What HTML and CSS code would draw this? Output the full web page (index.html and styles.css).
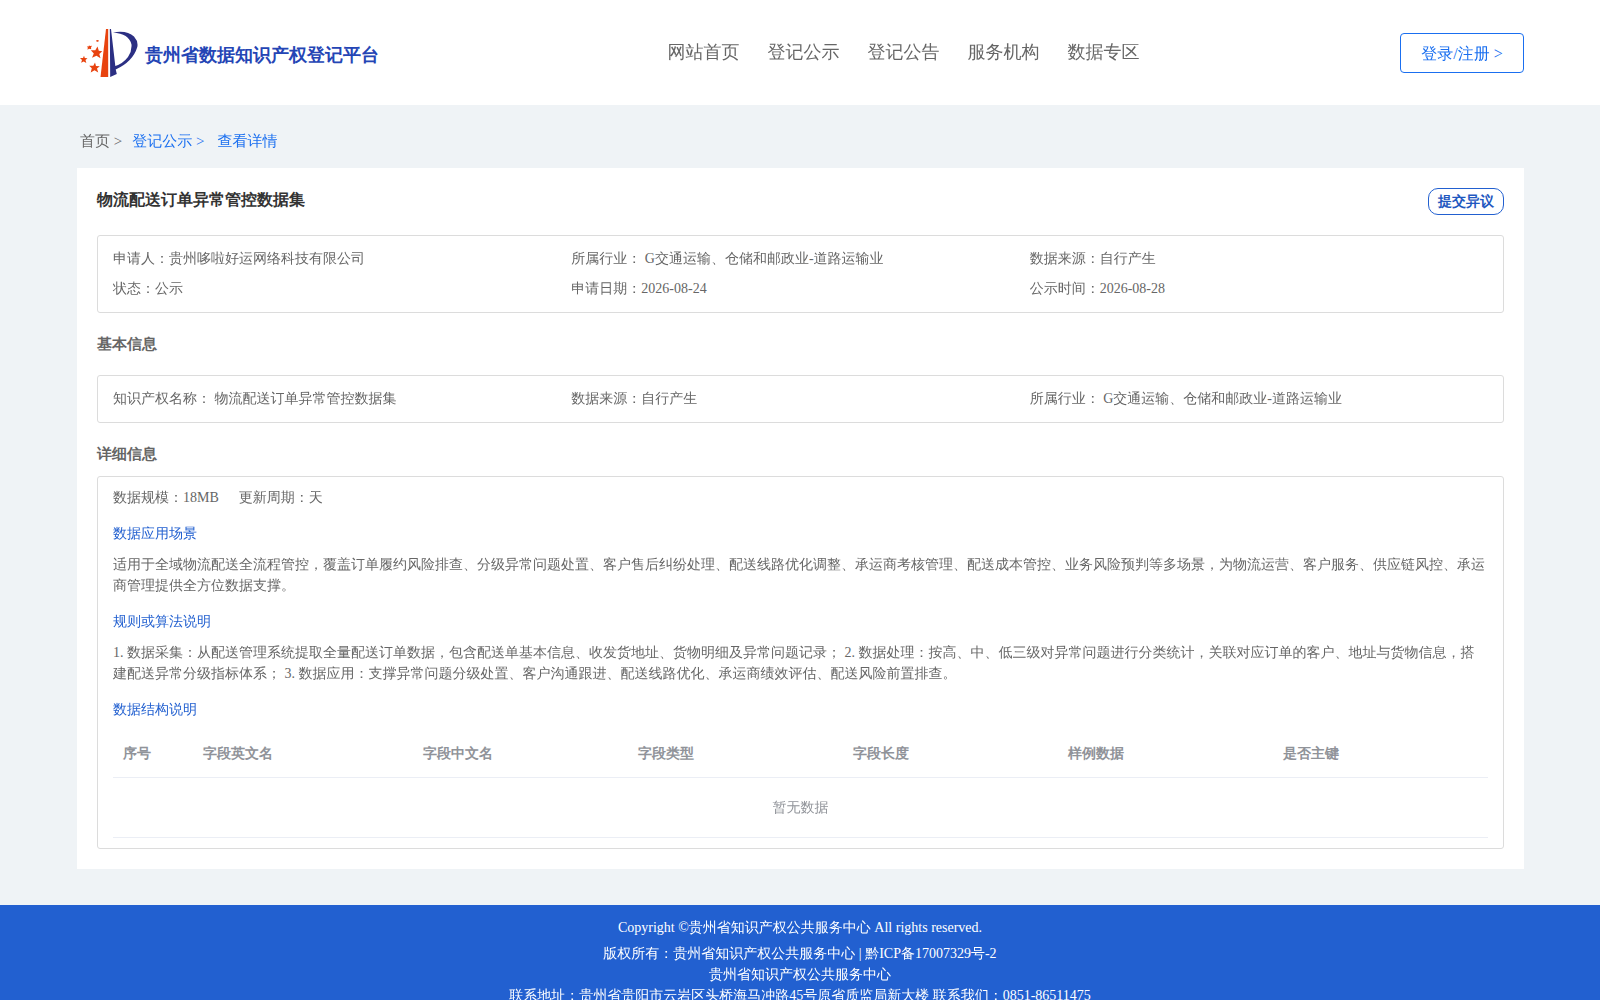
FILE: index.html
```html
<!DOCTYPE html>
<html lang="zh">
<head>
    <meta charset="UTF-8">
    <meta name="viewport" content="width=device-width, initial-scale=1.0">
    <title>贵州省数据知识产权登记平台</title>
    <link rel="stylesheet" href="styles.css">
</head>
<body>

    <!-- Header -->
    <header class="header">
        <a class="logo" href="#">
            <svg class="logo-icon" viewBox="0 0 58 50" aria-hidden="true">
                <path fill="#e8430f" d="M26 1H28.200V49H20.500Z"/>
                <path fill="#2b2f83" d="M29.800 1H31L35.300 38Q43 35.500 48 29Q52 23 51.500 16.500Q49 5.500 33 4.500Q47 2 54 8.500Q58.500 13.500 57.300 19Q53 33.500 35.700 41.500L36.800 46L30.200 49Z"/>
                <g fill="#e8430f">
                    <path d="M17.500 18.500L18.800 22.700L22.300 23.300L19.300 26L20.500 30.200L16.500 27.800L12 29.800L13.800 25.500L10.800 22.300L15.300 22.300Z"/>
                    <path d="M15 34.500L16 38L19.800 38.300L17 40.600L18.200 44.400L14.500 42.300L10.700 44.400L11.800 40.300L9.200 37.700L13.300 37.800Z"/>
                    <path d="M4 27.700L4.800 30L7.500 30.300L5.500 32L6.300 35L3.700 33.600L1.100 34.700L2 32L0 30L3 30Z"/>
                    <path d="M9 17.500L10.200 18L12 17.700L11 19.500L11.200 21.200L9 20.700L7.500 21.700L7.800 19.600L6.800 18.500L8.500 18.500Z"/>
                    <path d="M17 12L18.800 12.300L18.300 13.800L16.800 13.800L16 12.700Z"/>
                </g>
            </svg>
            <span class="logo-title">贵州省数据知识产权登记平台</span>
        </a>
        <nav class="nav">
            <a href="#">网站首页</a>
            <a href="#">登记公示</a>
            <a href="#">登记公告</a>
            <a href="#">服务机构</a>
            <a href="#">数据专区</a>
        </nav>
        <button class="login-button" type="button">登录/注册 &gt;</button>
    </header>

    <main class="main">
        <div class="breadcrumb">
            <a href="#">首页 &gt;</a>
            <a class="active" href="#">登记公示 &gt;</a>
            <a class="active last" href="#">查看详情</a>
        </div>

        <div class="card">
            <div class="card-header">
                <h1>物流配送订单异常管控数据集</h1>
                <button class="objection-button" type="button">提交异议</button>
            </div>

            <div class="info-box">
                <span>申请人：贵州哆啦好运网络科技有限公司</span>
                <span>所属行业： G交通运输、仓储和邮政业-道路运输业</span>
                <span>数据来源：自行产生</span>
                <span>状态：公示</span>
                <span>申请日期：2026-08-24</span>
                <span>公示时间：2026-08-28</span>
            </div>

            <!-- Basic info -->
            <h2>基本信息</h2>
            <div class="info-box basic">
                <span>知识产权名称： 物流配送订单异常管控数据集</span>
                <span>数据来源：自行产生</span>
                <span>所属行业： G交通运输、仓储和邮政业-道路运输业</span>
            </div>

            <!-- Detail info -->
            <h2>详细信息</h2>
            <div class="detail-box">
                <div class="scale">
                    <span>数据规模：18MB</span>
                    <span>更新周期：天</span>
                </div>
                <h3>数据应用场景</h3>
                <p>适用于全域物流配送全流程管控，覆盖订单履约风险排查、分级异常问题处置、客户售后纠纷处理、配送线路优化调整、承运商考核管理、配送成本管控、业务风险预判等多场景，为物流运营、客户服务、供应链风控、承运商管理提供全方位数据支撑。</p>
                <h3>规则或算法说明</h3>
                <p>1. 数据采集：从配送管理系统提取全量配送订单数据，包含配送单基本信息、收发货地址、货物明细及异常问题记录； 2. 数据处理：按高、中、低三级对异常问题进行分类统计，关联对应订单的客户、地址与货物信息，搭建配送异常分级指标体系； 3. 数据应用：支撑异常问题分级处置、客户沟通跟进、配送线路优化、承运商绩效评估、配送风险前置排查。</p>
                <h3>数据结构说明</h3>
                <table class="table">
                    <thead>
                        <tr>
                            <th class="col-index">序号</th>
                            <th class="col-name">字段英文名</th>
                            <th>字段中文名</th>
                            <th>字段类型</th>
                            <th>字段长度</th>
                            <th>样例数据</th>
                            <th>是否主键</th>
                        </tr>
                    </thead>
                    <tbody>
                        <tr>
                            <td class="empty" colspan="7">暂无数据</td>
                        </tr>
                    </tbody>
                </table>
            </div>
        </div>
    </main>

    <!-- Footer -->
    <footer class="footer">
        <p class="copyright">Copyright ©贵州省知识产权公共服务中心 All rights reserved.</p>
        <p>版权所有：贵州省知识产权公共服务中心 | 黔ICP备17007329号-2</p>
        <p>贵州省知识产权公共服务中心</p>
        <p>联系地址：贵州省贵阳市云岩区头桥海马冲路45号原省质监局新大楼 联系我们：0851-86511475</p>
    </footer>

</body>
</html>
```

FILE: styles.css
```css
* {
    box-sizing: border-box;
}

body {
    margin: 0;
    font-family: "Liberation Serif", "WenQuanYi Zen Hei", "Noto Sans CJK SC", serif;
    font-size: 14px;
    line-height: 21px;
    color: #666;
    background-color: #eff3f6;
}

h1, h2, h3, p {
    margin: 0;
}

a {
    color: inherit;
    text-decoration: none;
}

button {
    font-family: inherit;
    background-color: #fff;
    cursor: pointer;
}

/* Zen Hei has no bold face, let the system pick one */
.logo-title,
.card h1,
.card h2,
.card .objection-button,
.table th {
    font-family: "Liberation Serif", serif;
    font-weight: bold;
}

.header {
    display: flex;
    justify-content: space-between;
    align-items: center;
    height: 105px;
    padding: 0 76px 0 80px;
    background-color: #fff;
}

.logo {
    display: flex;
    align-items: center;
    gap: 7px;
    padding-right: 28px;
}

.logo-icon {
    width: 58px;
    height: 50px;
}

.logo-title {
    padding-top: 5px;
    font-size: 18px;
    color: #2445b5;
}

.nav {
    display: flex;
    gap: 28px;
    font-size: 18px;
}

.login-button {
    width: 124px;
    height: 40px;
    padding: 3px 0 0;
    border: 1px solid #1a6ff0;
    border-radius: 4px;
    font-size: 16px;
    color: #1a6ff0;
}

.main {
    padding: 0 76px 36px 77px;
}

.breadcrumb {
    display: flex;
    align-items: center;
    height: 63px;
    padding: 10px 3px 0;
    gap: 10px;
    font-size: 15px;
}

.breadcrumb .active {
    color: #1a6ff0;
}

.breadcrumb .last {
    padding-left: 3px;
}

.card {
    padding: 20px;
    background-color: #fff;
}

.card-header {
    display: flex;
    justify-content: space-between;
    align-items: flex-start;
    height: 47px;
}

.card-header h1 {
    font-size: 16px;
    line-height: 24px;
    color: #333;
}

.objection-button {
    width: 76px;
    height: 27px;
    padding: 0;
    border: 1px solid #2260d0;
    border-radius: 10px;
    font-size: 14px;
    color: #1f58c0;
}

.info-box {
    display: grid;
    grid-template-columns: repeat(3, 1fr);
    padding: 8px 15px;
    border: 1px solid #dcdcdc;
    border-radius: 3px;
    line-height: 30px;
}

.card h2 {
    padding: 20px 0 10px;
    font-size: 15px;
    line-height: 23px;
}

.info-box.basic {
    margin-top: 9px;
}

.detail-box {
    padding: 10px 15px;
    border: 1px solid #dcdcdc;
    border-radius: 3px;
}

.scale {
    display: flex;
    gap: 20px;
}

.detail-box h3 {
    margin: 15px 0 10px;
    font-size: 14px;
    font-weight: normal;
    color: #2260d0;
}

.table {
    width: 100%;
    table-layout: fixed;
    border-collapse: separate;
    border-spacing: 0;
    color: #909399;
}

.table th {
    padding: 12px 10px;
    border-bottom: 1px solid #ebeef5;
    line-height: 23px;
    text-align: left;
}

.table .col-index {
    width: 80px;
}

.table .col-name {
    width: 220px;
}

.table .empty {
    height: 60px;
    padding: 0;
    border-bottom: 1px solid #ebeef5;
    text-align: center;
}

.footer {
    padding: 12px 0;
    background-color: #2260d0;
    color: #fff;
    text-align: center;
}

.footer .copyright {
    margin-bottom: 5px;
}
```
